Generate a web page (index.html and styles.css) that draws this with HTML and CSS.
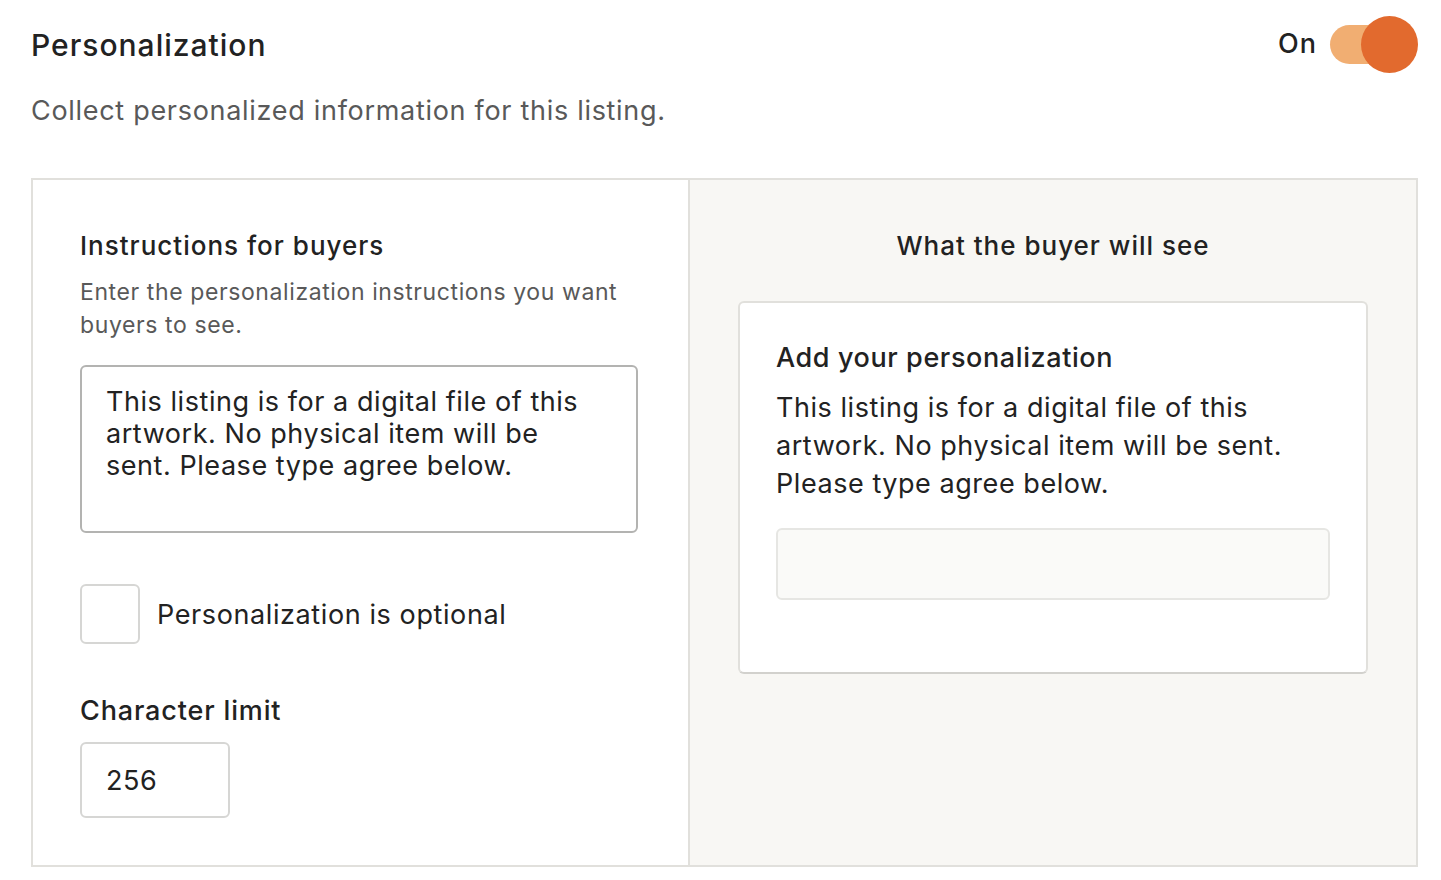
FILE: index.html
```html
<!DOCTYPE html>
<html lang="en">
<head>
    <meta charset="UTF-8">
    <title>Personalization</title>
    <link rel="stylesheet" href="styles.css">
</head>
<body>
<div class="page">
    <div class="header">
        <div class="title">Personalization</div>
        <label class="switch">
            <span class="switch-label">On</span>
            <input type="checkbox" checked>
            <span class="track"><span class="knob"></span></span>
        </label>
    </div>
    <div class="subtitle">Collect personalized information for this listing.</div>

    <div class="panel">
        <div class="editor">
            <div class="section-title">Instructions for buyers</div>
            <div class="help">Enter the personalization instructions you want buyers to see.</div>
            <textarea class="instructions">This listing is for a digital file of this artwork. No physical item will be sent. Please type agree below.</textarea>

            <label class="optional">
                <input type="checkbox">
                <span class="box"></span>
                <span>Personalization is optional</span>
            </label>

            <div class="limit-title">Character limit</div>
            <input class="limit" type="text" value="256">
        </div>

        <div class="preview">
            <div class="section-title center">What the buyer will see</div>
            <div class="card">
                <div class="card-title">Add your personalization</div>
                <div class="card-text">This listing is for a digital file of this artwork. No physical item will be sent. Please type agree below.</div>
                <div class="fake-input"></div>
            </div>
        </div>
    </div>
</div>
</body>
</html>
```

FILE: styles.css
```css
* {
    box-sizing: border-box;
}

html, body {
    margin: 0;
    padding: 0;
    background: #fff;
}

body {
    font-family: Inter, "Noto Sans", sans-serif;
    color: #222;
}

.page {
    padding: 0 23px 0 31px;
}

.header {
    display: flex;
    justify-content: space-between;
    align-items: center;
    height: 89px;
}

.title {
    font-size: 30px;
    font-weight: 500;
    letter-spacing: 1px;
}

.switch {
    display: flex;
    align-items: center;
    cursor: pointer;
}

.switch-label {
    font-size: 27px;
    font-weight: 500;
    letter-spacing: 1px;
    margin-right: 13px;
    margin-bottom: 2px;
}

.switch input {
    display: none;
}

.track {
    position: relative;
    display: block;
    width: 72px;
    height: 39px;
    margin-right: 16px;
    border-radius: 20px;
    background: #f1ae72;
}

.knob {
    position: absolute;
    top: -9px;
    right: -16px;
    width: 57px;
    height: 57px;
    border-radius: 50%;
    background: #e26a2e;
}

.subtitle {
    font-size: 27px;
    color: #595959;
    line-height: 44px;
    letter-spacing: 0.7px;
}

.panel {
    display: grid;
    grid-template-columns: 657px 1fr;
    border: 2px solid #e1e0dc;
    margin-top: 45px;
}

.editor {
    padding: 49px 48px 47px 47px;
    border-right: 2px solid #e1e0dc;
    display: flex;
    flex-direction: column;
    align-items: flex-start;
}

.section-title {
    font-size: 26px;
    font-weight: 500;
    line-height: 34px;
    letter-spacing: 1px;
}

.section-title.center {
    text-align: center;
}

.help {
    font-size: 23px;
    line-height: 33px;
    color: #595959;
    margin-top: 13px;
    letter-spacing: 0.6px;
}

.instructions {
    margin-top: 23px;
    width: 558px;
    height: 168px;
    padding: 19px 40px 0 24px;
    border: 2px solid #b3b3b1;
    border-radius: 6px;
    font-family: inherit;
    font-size: 27px;
    line-height: 32px;
    letter-spacing: 0.55px;
    color: #222;
    resize: none;
    outline: none;
    overflow: hidden;
}

.optional {
    display: flex;
    align-items: center;
    margin-top: 51px;
    font-size: 27px;
    letter-spacing: 0.6px;
    cursor: pointer;
}

.optional input {
    display: none;
}

.optional .box {
    width: 60px;
    height: 60px;
    border: 2px solid #d6d6d4;
    border-radius: 6px;
    margin-right: 17px;
}

.limit-title {
    margin-top: 50px;
    font-size: 27px;
    font-weight: 500;
    line-height: 34px;
    letter-spacing: 0.85px;
}

.limit {
    margin-top: 14px;
    width: 150px;
    height: 76px;
    padding: 0 24px;
    border: 2px solid #d6d6d4;
    border-radius: 6px;
    font-family: inherit;
    font-size: 27px;
    letter-spacing: 0.55px;
    color: #222;
    outline: none;
}

.preview {
    background: #f8f7f4;
    padding: 49px 48px 48px;
}

.card {
    margin-top: 38px;
    background: #fff;
    border: 2px solid #e1e0dc;
    border-bottom-color: #d2d1cd;
    border-radius: 6px;
    padding: 37px 36px 72px 36px;
}

.card-title {
    font-size: 27px;
    font-weight: 500;
    line-height: 36px;
    letter-spacing: 0.6px;
}

.card-text {
    margin-top: 13px;
    font-size: 27px;
    line-height: 38px;
    letter-spacing: 0.55px;
}

.fake-input {
    margin-top: 25px;
    height: 72px;
    background: #fafaf8;
    border: 2px solid #e6e6e3;
    border-radius: 6px;
}
```
